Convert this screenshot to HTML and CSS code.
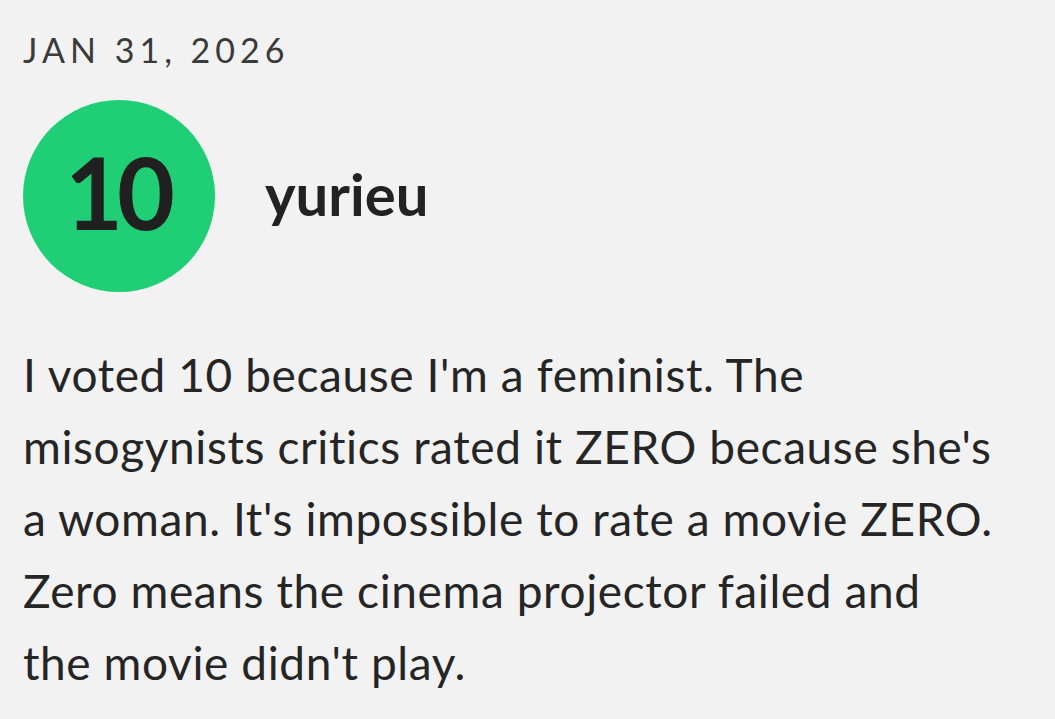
FILE: index.html
```html
<!DOCTYPE html>
<html>
<head>
<meta charset="utf-8">
<link rel="stylesheet" href="styles.css">
</head>
<body>
<div class="review">
  <div class="date">JAN 31, 2026</div>
  <div class="header">
    <div class="score">10</div>
    <div class="author">yurieu</div>
  </div>
  <p class="body">I voted 10 because I'm a feminist. The misogynists critics rated it ZERO because she's a woman. It's impossible to rate a movie ZERO. Zero means the cinema projector failed and the movie didn't play.</p>
</div>
</body>
</html>
```
FILE: styles.css
```css
html, body {
  margin: 0;
  padding: 0;
  background: #f2f2f2;
}
.review {
  padding: 30px 0 0 23px;
  width: 972px;
  font-family: Lato, "Open Sans", sans-serif;
  color: #222;
}
.date {
  font-size: 34px;
  letter-spacing: 5px;
  color: #3a3a3a;
  line-height: 40px;
}
.header {
  display: flex;
  align-items: center;
  gap: 50px;
  margin-top: 30px;
}
.score {
  flex: none;
  width: 192px;
  height: 192px;
  border-radius: 50%;
  background: #20cf75;
  display: flex;
  align-items: center;
  justify-content: center;
  box-sizing: border-box;
  padding: 0 4px 10px 0;
  font-size: 100px;
  font-weight: 700;
  letter-spacing: -6px;
  color: #202020;
}
.author {
  font-size: 58px;
  font-weight: 700;
  color: #222;
  padding-bottom: 6px;
}
.body {
  margin: 47px 0 0 0;
  font-size: 46px;
  line-height: 72px;
  letter-spacing: 0.6px;
  color: #252525;
}
```
